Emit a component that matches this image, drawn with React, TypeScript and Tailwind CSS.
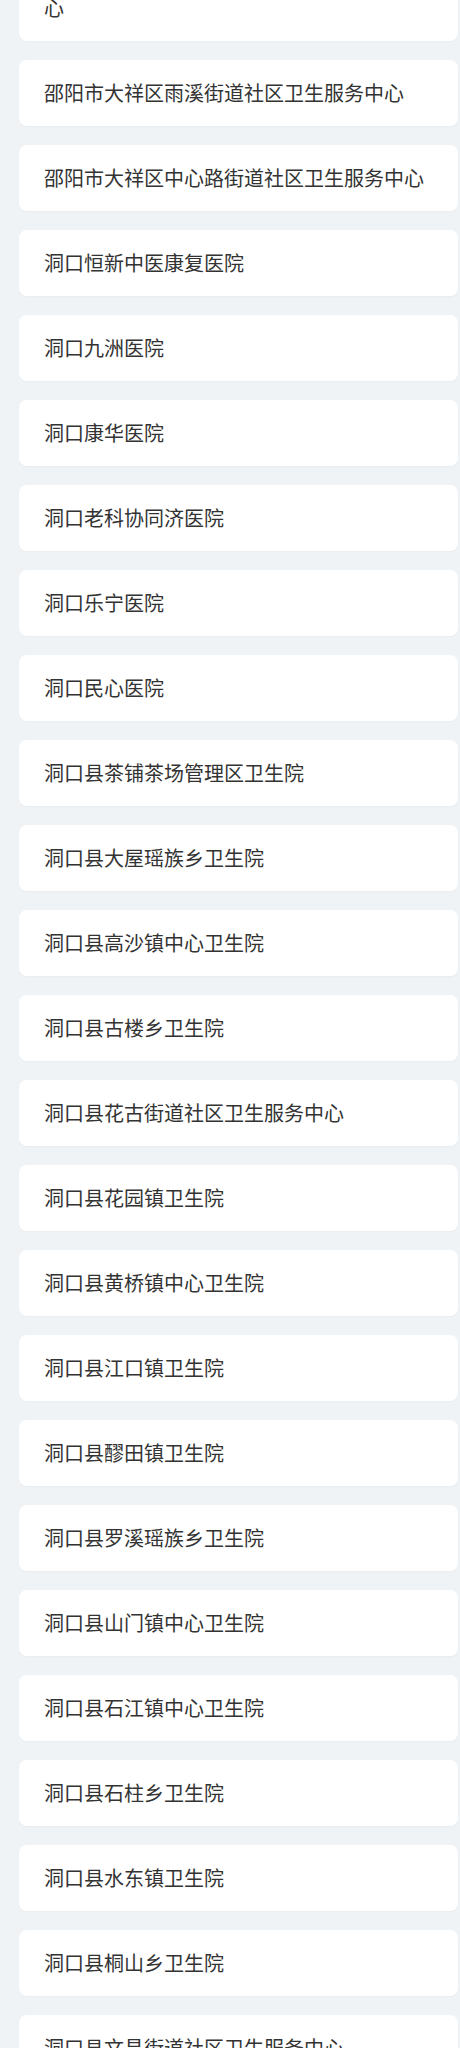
import React from 'react';

const hospitals: string[] = [
  '邵阳市大祥区火车南站街道社区卫生服务中心',
  '邵阳市大祥区雨溪街道社区卫生服务中心',
  '邵阳市大祥区中心路街道社区卫生服务中心',
  '洞口恒新中医康复医院',
  '洞口九洲医院',
  '洞口康华医院',
  '洞口老科协同济医院',
  '洞口乐宁医院',
  '洞口民心医院',
  '洞口县茶铺茶场管理区卫生院',
  '洞口县大屋瑶族乡卫生院',
  '洞口县高沙镇中心卫生院',
  '洞口县古楼乡卫生院',
  '洞口县花古街道社区卫生服务中心',
  '洞口县花园镇卫生院',
  '洞口县黄桥镇中心卫生院',
  '洞口县江口镇卫生院',
  '洞口县醪田镇卫生院',
  '洞口县罗溪瑶族乡卫生院',
  '洞口县山门镇中心卫生院',
  '洞口县石江镇中心卫生院',
  '洞口县石柱乡卫生院',
  '洞口县水东镇卫生院',
  '洞口县桐山乡卫生院',
  '洞口县文昌街道社区卫生服务中心',
];

const App: React.FC = () => {
  return (
    <div
      className="min-h-screen bg-[#f0f3f6] overflow-hidden"
      style={{ fontFamily: '"Noto Sans CJK SC", "Noto Sans", sans-serif' }}
    >
      {/* 医院列表 */}
      <ul className="flex flex-col gap-[19px] ml-[19px] mr-[2px] -mt-[55px]">
        {hospitals.map((name) => (
          <li
            key={name}
            className="bg-white rounded-lg px-[25px] py-[18px] text-[20px] leading-[30px] text-[#333333] shadow-[0_1px_2px_rgba(0,0,0,0.03)]"
          >
            {name}
          </li>
        ))}
      </ul>
    </div>
  );
};

export default App;
